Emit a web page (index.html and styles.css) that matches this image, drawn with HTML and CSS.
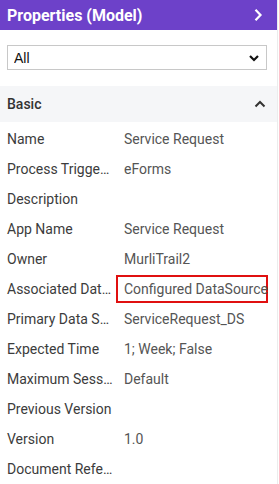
FILE: index.html
```html
<!DOCTYPE html>
<html lang="en">
    <head>
        <meta charset="utf-8">
        <meta name="viewport" content="width=device-width, initial-scale=1">
        <title>Properties (Model)</title>
        <link rel="stylesheet" href="styles.css">
    </head>
    <body>
        <header class="panel-header">
            <span class="panel-title">Properties (Model)</span>
            <svg class="panel-toggle" width="10" height="14" viewBox="0 0 10 14">
                <path d="M2.5 1.8 L7.5 7 L2.5 12.2" fill="none" stroke="#fff" stroke-width="2.2"/>
            </svg>
        </header>

        <div class="filter">
            <select class="filter-select">
                <option>All</option>
            </select>
            <svg class="filter-arrow" width="10" height="8" viewBox="0 0 10 8">
                <path d="M1 2 L5 6 L9 2" fill="none" stroke="#111" stroke-width="2.2"/>
            </svg>
        </div>

        <div class="prop-scroll">
            <section class="prop-group">
                <div class="group-head">
                    <span>Basic</span>
                    <svg width="12" height="8" viewBox="0 0 12 8">
                        <path d="M1.5 6.5 L6 2 L10.5 6.5" fill="none" stroke="#333" stroke-width="2"/>
                    </svg>
                </div>

                <div class="prop-rows">
                    <div class="prop-row"><span class="prop-label">Name</span><span class="prop-value">Service Request</span></div>
                    <div class="prop-row"><span class="prop-label">Process Trigger Type</span><span class="prop-value">eForms</span></div>
                    <div class="prop-row"><span class="prop-label">Description</span><span class="prop-value"></span></div>
                    <div class="prop-row"><span class="prop-label">App Name</span><span class="prop-value">Service Request</span></div>
                    <div class="prop-row"><span class="prop-label">Owner</span><span class="prop-value">MurliTrail2</span></div>
                    <div class="prop-row"><span class="prop-label">Associated DataSource</span><span class="prop-value highlight">Configured DataSource</span></div>
                    <div class="prop-row"><span class="prop-label">Primary Data Source</span><span class="prop-value">ServiceRequest_DS</span></div>
                    <div class="prop-row"><span class="prop-label">Expected Time</span><span class="prop-value">1; Week; False</span></div>
                    <div class="prop-row"><span class="prop-label">Maximum Sessions</span><span class="prop-value">Default</span></div>
                    <div class="prop-row"><span class="prop-label">Previous Version</span><span class="prop-value"></span></div>
                    <div class="prop-row"><span class="prop-label">Version</span><span class="prop-value">1.0</span></div>
                    <div class="prop-row"><span class="prop-label">Document Reference</span><span class="prop-value"></span></div>
                </div>
            </section>
        </div>
    </body>
</html>
```

FILE: styles.css
```css
/* page */
body {
    margin: 0;
    font-family: Roboto, "Liberation Sans", Arial, sans-serif;
    background: #fff;
    color: #3a3a3a;
    width: 278px;
    height: 484px;
    overflow: hidden;
    border-right: 1px solid #ececec;
    box-sizing: border-box;
}

/* header */
.panel-header {
    height: 30px;
    background-color: #6d41c9;
    color: #fff;
    display: flex;
    align-items: center;
    justify-content: space-between;
    padding: 0 14px 0 7px;
}

.panel-title {
    font-size: 16px;
    font-weight: bold;
}

/* filter select */
.filter {
    position: relative;
    margin: 15px 10px 16px 7px;
}

.filter-select {
    appearance: none;
    -webkit-appearance: none;
    display: block;
    width: 100%;
    height: 25px;
    margin: 0;
    padding: 0 6px;
    border: 1px solid #c8c8c8;
    border-radius: 0;
    background: #fff;
    font-family: "Liberation Sans", Arial, sans-serif;
    font-size: 14px;
    color: #111;
}

.filter-arrow {
    position: absolute;
    right: 8px;
    top: 9px;
    pointer-events: none;
}

/* properties list */
.prop-scroll {
    height: 398px;
    overflow-y: scroll;
}

.prop-scroll::-webkit-scrollbar {
    width: 8px;
}

.prop-scroll::-webkit-scrollbar-track {
    background: #fff;
}

.prop-scroll::-webkit-scrollbar-thumb {
    background: #a9afbb;
    border-radius: 4px;
}

.prop-group {
    padding-bottom: 83px;
}

.group-head {
    height: 36px;
    background: #f5f6f8;
    display: flex;
    align-items: center;
    justify-content: space-between;
    padding: 0 11px 0 7px;
    font-size: 14px;
    font-weight: 500;
    color: #333;
}

.prop-rows {
    padding-top: 2px;
}

.prop-row {
    height: 30px;
    display: flex;
    align-items: center;
    font-size: 14px;
}

.prop-label {
    width: 106px;
    flex-shrink: 0;
    padding-left: 7px;
    margin-right: 11px;
    white-space: nowrap;
    overflow: hidden;
    text-overflow: ellipsis;
    color: #3c3c3c;
}

.prop-value {
    color: #555;
    white-space: nowrap;
}

.highlight {
    border: 2px solid #e01010;
    margin-left: -8px;
    padding: 4px 0 4px 6px;
    width: 142px;
}
```
